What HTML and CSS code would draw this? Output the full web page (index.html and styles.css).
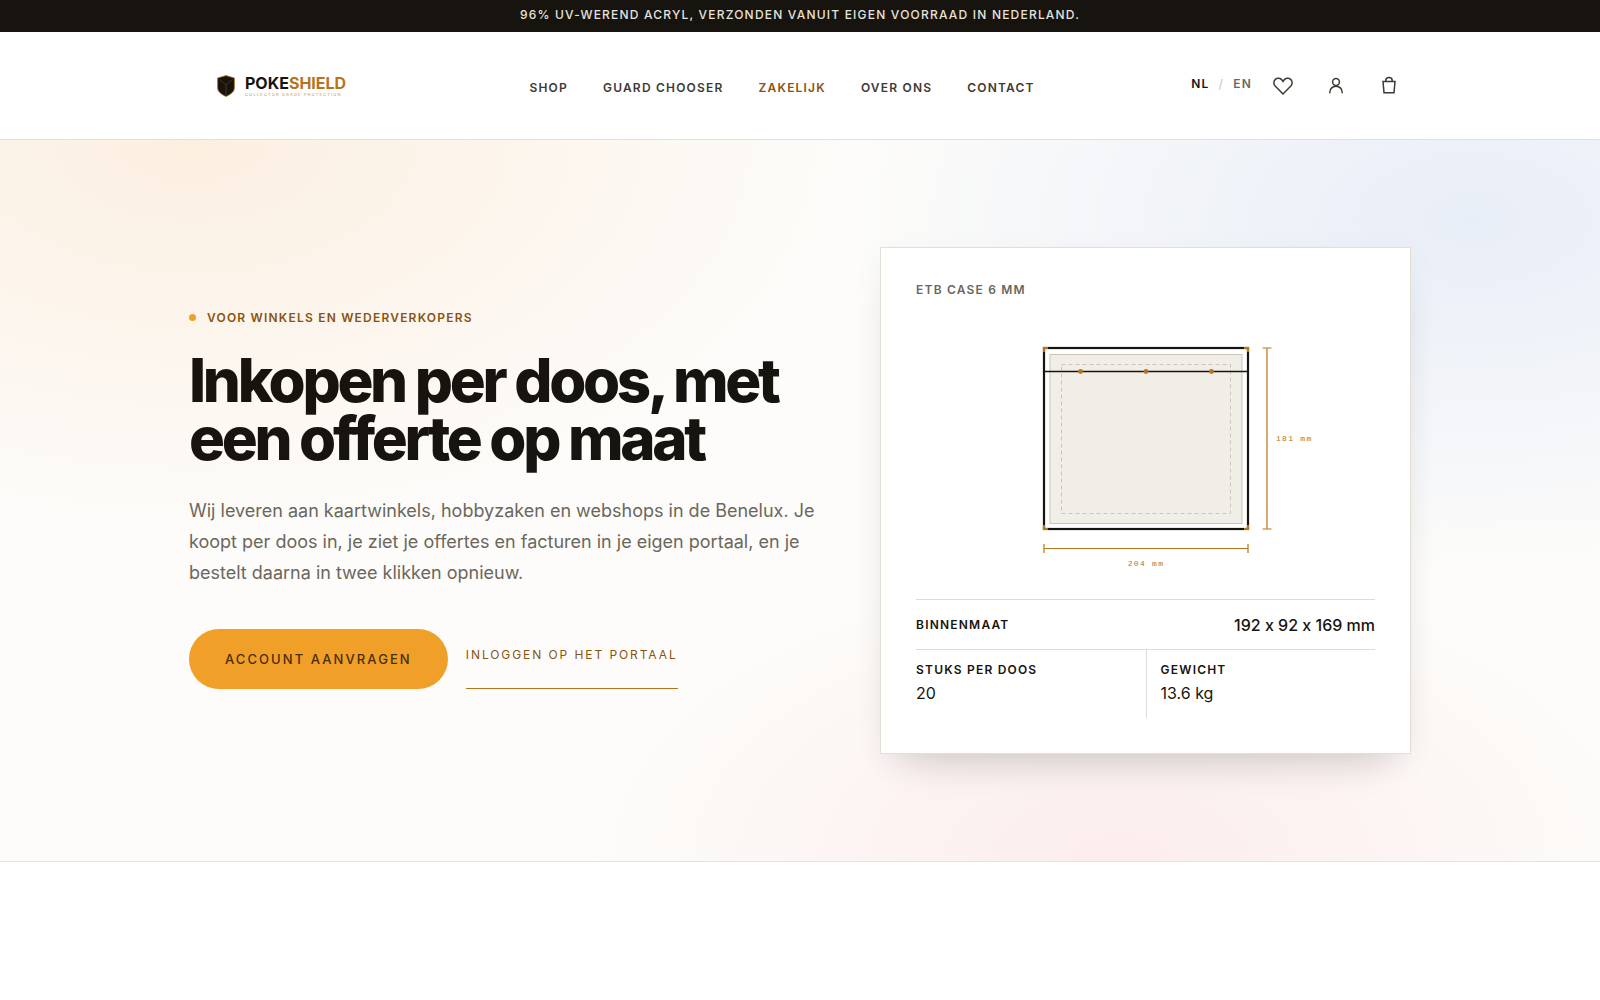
FILE: index.html
```html
<!DOCTYPE html>
<html lang="nl">
<head>
    <meta charset="UTF-8">
    <meta name="viewport" content="width=device-width, initial-scale=1.0">
    <title>PokeShield - Zakelijk</title>
    <link rel="stylesheet" href="styles.css">
</head>
<body>
    <div class="topbar">96% UV-werend acryl, verzonden vanuit eigen voorraad in Nederland.</div>

    <header class="header">
        <div class="header-inner">
            <a class="logo" href="#">
                <svg class="logo-shield" viewBox="0 0 18 22" aria-hidden="true">
                    <path d="M9 .6 17.400 3v9.500c0 4.200-3.600 7-8.400 8.900C4.200 19.500.6 16.700.6 12.500V3z" fill="#17140f" stroke="#b8741a" stroke-width=".8"/>
                    <path d="M2.500 4.500 9 10l6.500-5.500M9 10v10" fill="none" stroke="#6b4a1c" stroke-width=".6"/>
                </svg>
                <span class="logo-text">
                    <span class="logo-name">POKE<span class="logo-accent">SHIELD</span></span>
                    <span class="logo-tagline">COLLECTOR GRADE PROTECTION</span>
                </span>
            </a>

            <nav class="nav">
                <a href="#">Shop</a>
                <a href="#">Guard Chooser</a>
                <a class="active" href="#">Zakelijk</a>
                <a href="#">Over ons</a>
                <a href="#">Contact</a>
            </nav>

            <div class="tools">
                <div class="lang">
                    <a class="current" href="#">NL</a>
                    <span>/</span>
                    <a href="#">EN</a>
                </div>
                <div class="icons">
                    <button class="icon-btn" aria-label="Verlanglijst">
                        <svg viewBox="0 0 20 20"><path d="M10 18 2.400 10.300C.3 8.200.5 5 2.300 3.400c2-1.700 5.100-1.400 6.700.6l1 1.400L11 4c1.600-2 4.700-2.300 6.700-.6 1.800 1.600 2 4.800-.1 6.900z"/></svg>
                    </button>
                    <button class="icon-btn" aria-label="Account">
                        <svg viewBox="0 0 20 20"><circle cx="10" cy="6" r="3.400"/><path d="M3.800 17.200v-.8c0-3.700 2.800-6.200 6.200-6.200s6.200 2.500 6.200 6.200v.8"/></svg>
                    </button>
                    <button class="icon-btn" aria-label="Winkelwagen">
                        <svg viewBox="0 0 20 20"><path d="M4 5.500h12l-1 11.200H5zM6.800 5.500V4.600c0-4 6.400-4 6.400 0v.9"/></svg>
                    </button>
                </div>
            </div>
        </div>
    </header>

    <main class="hero">
        <div class="hero-inner">
            <div class="hero-copy">
                <p class="eyebrow">Voor winkels en wederverkopers</p>
                <h1>Inkopen per doos, met<br>een offerte op maat</h1>
                <p class="lead">Wij leveren aan kaartwinkels, hobbyzaken en webshops in de Benelux. Je koopt per doos in, je ziet je offertes en facturen in je eigen portaal, en je bestelt daarna in twee klikken opnieuw.</p>
                <div class="actions">
                    <a class="btn-primary" href="#">Account aanvragen</a>
                    <a class="btn-link" href="#">Inloggen op het portaal</a>
                </div>
            </div>

            <section class="card">
                <h2>ETB case 6 mm</h2>
                <svg class="drawing" viewBox="-54 0 334 240" role="img" aria-label="Maattekening ETB case">
                    <!-- case -->
                    <rect x="11" y="13" width="204" height="181" fill="#fff" stroke="#17140f" stroke-width="2.200"/>
                    <rect x="17" y="19.500" width="192" height="169" fill="#f1eee7" stroke="#c9c5b6"/>
                    <rect x="28.500" y="29.500" width="169" height="149" fill="none" stroke="#c9c5b8" stroke-dasharray="4 3"/>
                    <path d="M11 36.500h204" stroke="#17140f" stroke-width="1.300"/>
                    <!-- corners and magnets -->
                    <path d="M11 17v-4h4M211 13h4v4M11 190v4h4M211 194h4v-4" fill="none" stroke="#b8741a" stroke-width="2.200"/>
                    <g fill="#b8741a">
                        <circle cx="47.500" cy="36.500" r="2.400"/>
                        <circle cx="113" cy="36.500" r="2.400"/>
                        <circle cx="178.500" cy="36.500" r="2.400"/>
                    </g>
                    <!-- dimensions -->
                    <path d="M11 213.500h204M11 209v9M215 209v9M234 13v181M229.500 13h9M229.500 194h9" fill="none" stroke="#b8741a" stroke-width="1.200"/>
                    <text x="113" y="231" text-anchor="middle">204 mm</text>
                    <text x="243" y="106">181 mm</text>
                </svg>
                <dl class="specs">
                    <div class="spec-wide">
                        <dt>Binnenmaat</dt>
                        <dd>192 x 92 x 169 mm</dd>
                    </div>
                    <div class="spec">
                        <dt>Stuks per doos</dt>
                        <dd>20</dd>
                    </div>
                    <div class="spec">
                        <dt>Gewicht</dt>
                        <dd>13.6 kg</dd>
                    </div>
                </dl>
            </section>
        </div>
    </main>
</body>
</html>
```

FILE: styles.css
```css
* { box-sizing: border-box; }
body {
    margin: 0;
    font-family: Inter, "Liberation Sans", sans-serif;
    font-variant-ligatures: no-contextual;
    color: #17140f;
    background-color: #fff;
}
a { color: inherit; text-decoration: none; }
h1, h2, p, dl, dd { margin: 0; }

.topbar {
    height: 32px;
    background-color: #17140f;
    color: #e6e3dc;
    text-align: center;
    text-transform: uppercase;
    font-size: 12px;
    font-weight: 500;
    line-height: 30px;
    letter-spacing: 0.1em;
}

.header { border-bottom: 1px solid #e8e2d8; }
.header-inner {
    max-width: 1222px;
    height: 107px;
    margin: 0 auto;
    padding: 0 0 0 28px;
    display: flex;
    align-items: center;
    justify-content: space-between;
}
.logo { display: flex; align-items: center; gap: 10px; width: 156px; }
.logo-shield { width: 18px; height: 22px; }
.logo-text { display: flex; flex-direction: column; }
.logo-name { font-size: 16px; font-weight: 700; line-height: 18px; }
.logo-accent { color: #b8741a; }
.logo-tagline { color: #c98f45; font-size: 4px; line-height: 6px; letter-spacing: 0.3em; white-space: nowrap; }

.nav { display: flex; gap: 35px; padding-top: 3px; }
.nav a {
    color: #3d3a33;
    text-transform: uppercase;
    font-size: 12px;
    font-weight: 600;
    letter-spacing: 0.1em;
}
.nav .active { color: #8a5310; }

.tools { display: flex; align-items: center; gap: 9px; }
.lang { display: flex; gap: 9px; padding-bottom: 4px; font-size: 12px; font-weight: 600; letter-spacing: 0.1em; color: #6b675c; }
.lang span { color: #d5d2ca; }
.lang .current { color: #17140f; }
.icons { display: flex; gap: 9px; }
.icon-btn {
    width: 44px;
    height: 44px;
    padding: 12px;
    border: none;
    background: none;
    cursor: pointer;
}
.icon-btn svg { display: block; width: 20px; height: 20px; fill: none; stroke: #3d3a33; stroke-width: 1.5; }

.hero {
    border-bottom: 1px solid #e8e2d8;
    background:
        radial-gradient(ellipse 42% 55% at 12% 0%, rgba(240, 150, 50, 0.13), transparent),
        radial-gradient(ellipse 40% 50% at 92% 11%, rgba(90, 140, 230, 0.13), transparent),
        radial-gradient(ellipse 34% 42% at 70% 100%, rgba(230, 60, 60, 0.08), transparent),
        #fdfcfa;
}
.hero-inner {
    max-width: 1222px;
    margin: 0 auto;
    padding: 107px 0;
    display: grid;
    grid-template-columns: 6fr 5fr;
    gap: 54px;
    align-items: center;
}
.hero-copy { padding-bottom: 4px; }
.eyebrow {
    display: flex;
    align-items: center;
    gap: 11px;
    color: #8a5310;
    text-transform: uppercase;
    font-size: 12px;
    font-weight: 600;
    line-height: 18px;
    letter-spacing: 0.1em;
}
.eyebrow::before {
    content: "";
    width: 7px;
    height: 7px;
    border-radius: 50%;
    background-color: #f0a028;
}
h1 {
    margin-top: 24px;
    font-size: 60px;
    font-weight: 800;
    line-height: 58px;
    letter-spacing: -0.055em;
}
.lead {
    margin-top: 28px;
    color: #6b675c;
    font-size: 18px;
    line-height: 31px;
}
.actions { display: flex; gap: 18px; margin-top: 41px; }
.btn-primary {
    padding: 0 36px;
    border-radius: 30px;
    background-color: #f0a028;
    color: #4a2c06;
    text-transform: uppercase;
    font-size: 13px;
    font-weight: 500;
    line-height: 60px;
    letter-spacing: 0.16em;
}
.btn-link {
    border-bottom: 1px solid #b8741a;
    color: #8a5310;
    text-transform: uppercase;
    font-size: 12px;
    line-height: 52px;
    letter-spacing: 0.16em;
}

.card {
    padding: 35px;
    border: 1px solid #e4dfd6;
    background-color: #fff;
    box-shadow: 0 24px 40px -24px rgba(23, 20, 15, 0.22), 0 8px 32px rgba(23, 20, 15, 0.04);
}
.card h2 {
    color: #6b675c;
    text-transform: uppercase;
    font-size: 12px;
    font-weight: 600;
    line-height: 14px;
    letter-spacing: 0.1em;
}
.drawing { display: block; width: 334px; height: 240px; margin: 38px auto 24px; }
.drawing text { fill: #b8741a; font: 8px "Liberation Mono", monospace; letter-spacing: 0.16em; }
.specs { display: grid; grid-template-columns: 1fr 1fr; }
.specs dt { text-transform: uppercase; font-size: 12px; font-weight: 600; line-height: 18px; letter-spacing: 0.1em; }
.specs dd { font-size: 16px; line-height: 28px; }
.spec-wide {
    grid-column: 1 / -1;
    display: flex;
    align-items: center;
    justify-content: space-between;
    height: 51px;
    border-top: 1px solid #e0ddd6;
    border-bottom: 1px solid #e0ddd6;
}
.spec-wide dd { font-weight: 500; }
.spec { padding: 11px 0; }
.spec + .spec { padding-left: 14px; border-left: 1px solid #e0ddd6; }
```
